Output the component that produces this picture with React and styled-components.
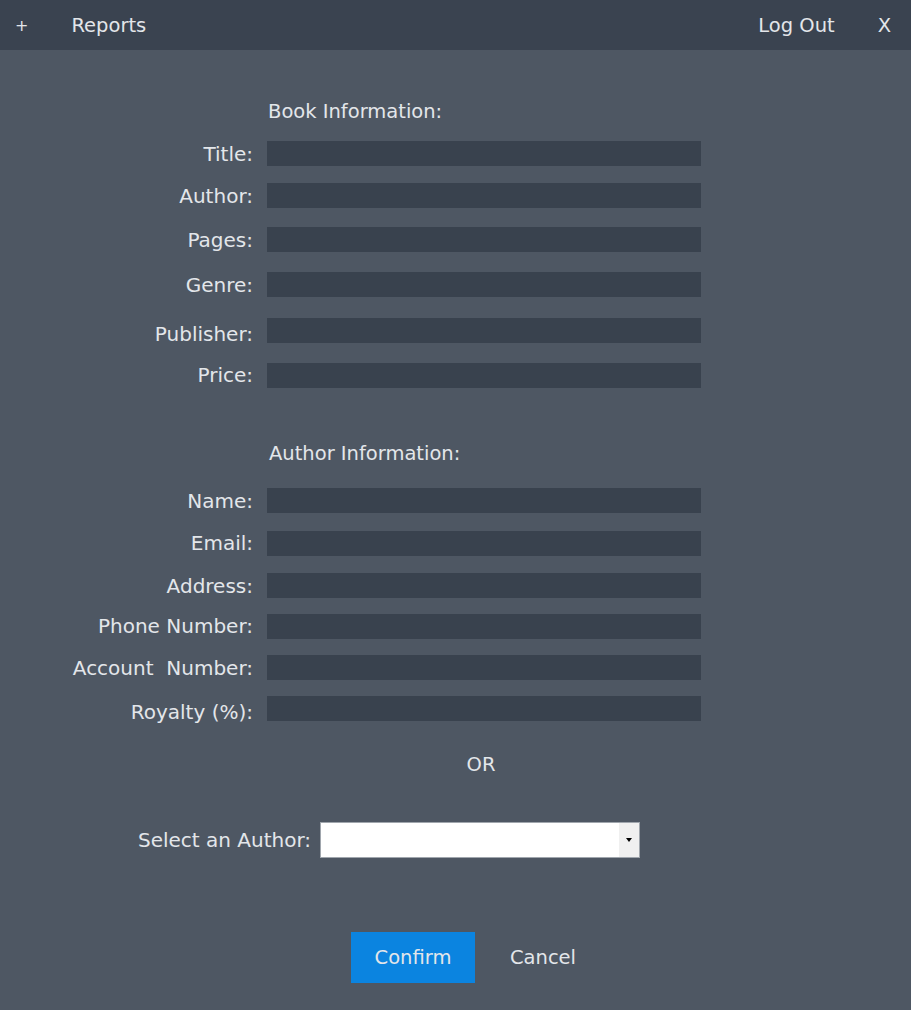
import React from "react";
import styled, { createGlobalStyle } from "styled-components";

const Global = createGlobalStyle`
  html, body {
    margin: 0;
    padding: 0;
    background: #4e5763;
  }
  body {
    font-family: "DejaVu Sans", "Liberation Sans", sans-serif;
    color: #e3e6ea;
  }
  * { box-sizing: border-box; }
`;

const Page = styled.div`
  width: 911px;
  min-height: 1010px;
  background: #4e5763;
`;

const TopBar = styled.header`
  height: 50px;
  background: #3a4350;
  display: flex;
  align-items: center;
  font-size: 19.5px;
  padding: 0 20px 0 15px;
`;

const BarItem = styled.span`
  margin-left: ${(p) => p.$ml || 0}px;
  margin-right: ${(p) => p.$mr || 0}px;
  font-size: ${(p) => p.$fs || 19.5}px;
`;

const Spacer = styled.div`
  flex: 1;
`;

const Form = styled.main`
  display: flex;
  flex-direction: column;
  padding-top: 50px;
`;

const Heading = styled.div`
  margin-left: ${(p) => p.$ml}px;
  margin-top: ${(p) => p.$mt || 0}px;
  font-size: 19.5px;
  line-height: 24px;
  height: 24px;
`;

const Row = styled.div`
  display: grid;
  grid-template-columns: 253px 434px;
  column-gap: 14px;
  align-items: center;
  margin-top: ${(p) => p.$mt}px;
`;

const Label = styled.label`
  text-align: right;
  font-size: 20px;
  line-height: 24px;
  white-space: pre;
  position: relative;
  top: ${(p) => p.$dy || 0}px;
`;

const Field = styled.div`
  height: 25px;
  background: #39424e;
`;

const Or = styled.div`
  margin-top: 32px;
  margin-left: 264px;
  width: 434px;
  text-align: center;
  font-size: 19.5px;
  line-height: 24px;
`;

const SelectRow = styled.div`
  display: flex;
  align-items: center;
  margin-top: 45px;
  padding-left: 138px;
  gap: 9px;
`;

const SelectLabel = styled.label`
  font-size: 20px;
  line-height: 24px;
  white-space: nowrap;
`;

const SelectBox = styled.div`
  width: 320px;
  height: 36px;
  background: #ffffff;
  border: 1px solid #a0a6ad;
  display: flex;
  justify-content: flex-end;
`;

const DropBtn = styled.div`
  width: 20px;
  background: #f0f0f0;
  display: flex;
  align-items: center;
  justify-content: center;
`;

const Caret = styled.div`
  width: 0;
  height: 0;
  border-left: 3px solid transparent;
  border-right: 3px solid transparent;
  border-top: 4px solid #000;
`;

const Buttons = styled.div`
  display: flex;
  margin-top: 74px;
  padding-left: 351px;
  gap: 6px;
`;

const Button = styled.button`
  width: 124px;
  height: 51px;
  border: none;
  background: ${(p) => (p.$primary ? "#0b84e0" : "transparent")};
  color: #e3e6ea;
  font-family: inherit;
  font-size: 19.5px;
  padding: 0;
  cursor: pointer;
`;

const book = [
  ["Title:", 17],
  ["Author:", 17],
  ["Pages:", 19],
  ["Genre:", 20, 0],
  ["Publisher:", 21, 3],
  ["Price:", 20, -1],
];

const author = [
  ["Name:", 22],
  ["Email:", 18, -1],
  ["Address:", 17],
  ["Phone Number:", 16, -1],
  ["Account  Number:", 16],
  ["Royalty (%):", 16, 3],
];

export default function App() {
  return (
    <Page>
      <Global />
      <TopBar>
        <BarItem $fs={16}>+</BarItem>
        <BarItem $ml={43}>Reports</BarItem>
        <Spacer />
        <BarItem $mr={43}>Log Out</BarItem>
        <BarItem>X</BarItem>
      </TopBar>
      <Form>
        <Heading $ml={268}>Book Information:</Heading>
        {book.map(([l, mt, dy]) => (
          <Row key={l} $mt={mt}>
            <Label $dy={dy}>{l}</Label>
            <Field />
          </Row>
        ))}
        <Heading $ml={269} $mt={54}>
          Author Information:
        </Heading>
        {author.map(([l, mt, dy]) => (
          <Row key={l} $mt={mt}>
            <Label $dy={dy}>{l}</Label>
            <Field />
          </Row>
        ))}
        <Or>OR</Or>
        <SelectRow>
          <SelectLabel>Select an Author:</SelectLabel>
          <SelectBox>
            <DropBtn>
              <Caret />
            </DropBtn>
          </SelectBox>
        </SelectRow>
        <Buttons>
          <Button $primary>Confirm</Button>
          <Button>Cancel</Button>
        </Buttons>
      </Form>
    </Page>
  );
}
